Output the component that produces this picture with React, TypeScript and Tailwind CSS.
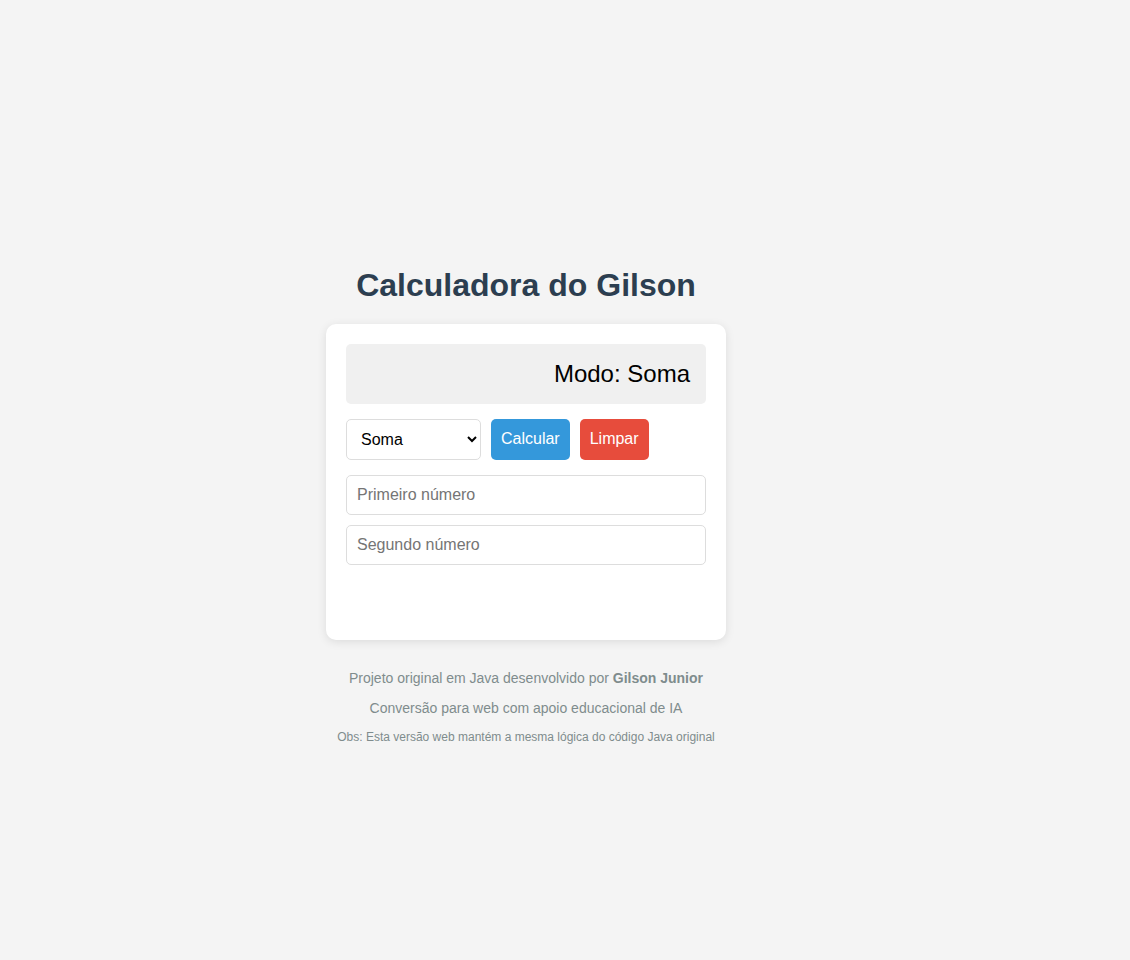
import React from "react";

export default function App() {
  return (
    <div
      className="min-h-screen w-full bg-[#f4f4f4] flex flex-col items-center justify-center pt-[50px] pr-[78px]"
      style={{ fontFamily: '"Liberation Sans", Arial, sans-serif' }}
    >
      <h1 className="text-[32px] leading-[37px] font-bold text-[#2c3e50] mb-[20px]">
        Calculadora do Gilson
      </h1>
      <div className="w-[400px] bg-white rounded-[10px] p-[20px] pb-[75px] shadow-[0_2px_10px_rgba(0,0,0,0.1)]">
        <div className="h-[60px] bg-[#f0f0f0] rounded-[5px] flex items-center justify-end pr-[16px] text-[24px] text-black">
          Modo: Soma
        </div>
        <div className="flex gap-[10px] mt-[15px]">
          <select
            className="w-[135px] h-[41px] border border-[#ddd] rounded-[5px] px-[10px] text-[16px] bg-white text-black"
            defaultValue="soma"
          >
            <option value="soma">Soma</option>
            <option value="sub">Subtração</option>
            <option value="mult">Multiplicação</option>
            <option value="div">Divisão</option>
          </select>
          <button className="h-[41px] px-[10px] rounded-[5px] bg-[#3498db] text-white text-[16px]">
            Calcular
          </button>
          <button className="h-[41px] px-[10px] rounded-[5px] bg-[#e74c3c] text-white text-[16px]">
            Limpar
          </button>
        </div>
        <input
          type="text"
          placeholder="Primeiro número"
          className="mt-[15px] w-full h-[40px] border border-[#ddd] rounded-[5px] px-[10px] text-[16px] placeholder:text-[#757575] outline-none"
        />
        <input
          type="text"
          placeholder="Segundo número"
          className="mt-[10px] w-full h-[40px] border border-[#ddd] rounded-[5px] px-[10px] text-[16px] placeholder:text-[#757575] outline-none"
        />
      </div>
      <div className="mt-[30px] flex flex-col items-center text-[#7f8c8d]">
        <p className="text-[14px] leading-[16px]">
          Projeto original em Java desenvolvido por <strong>Gilson Junior</strong>
        </p>
        <p className="text-[14px] leading-[16px] mt-[14px]">
          Conversão para web com apoio educacional de IA
        </p>
        <p className="text-[12px] leading-[14px] mt-[14px]">
          Obs: Esta versão web mantém a mesma lógica do código Java original
        </p>
      </div>
    </div>
  );
}
